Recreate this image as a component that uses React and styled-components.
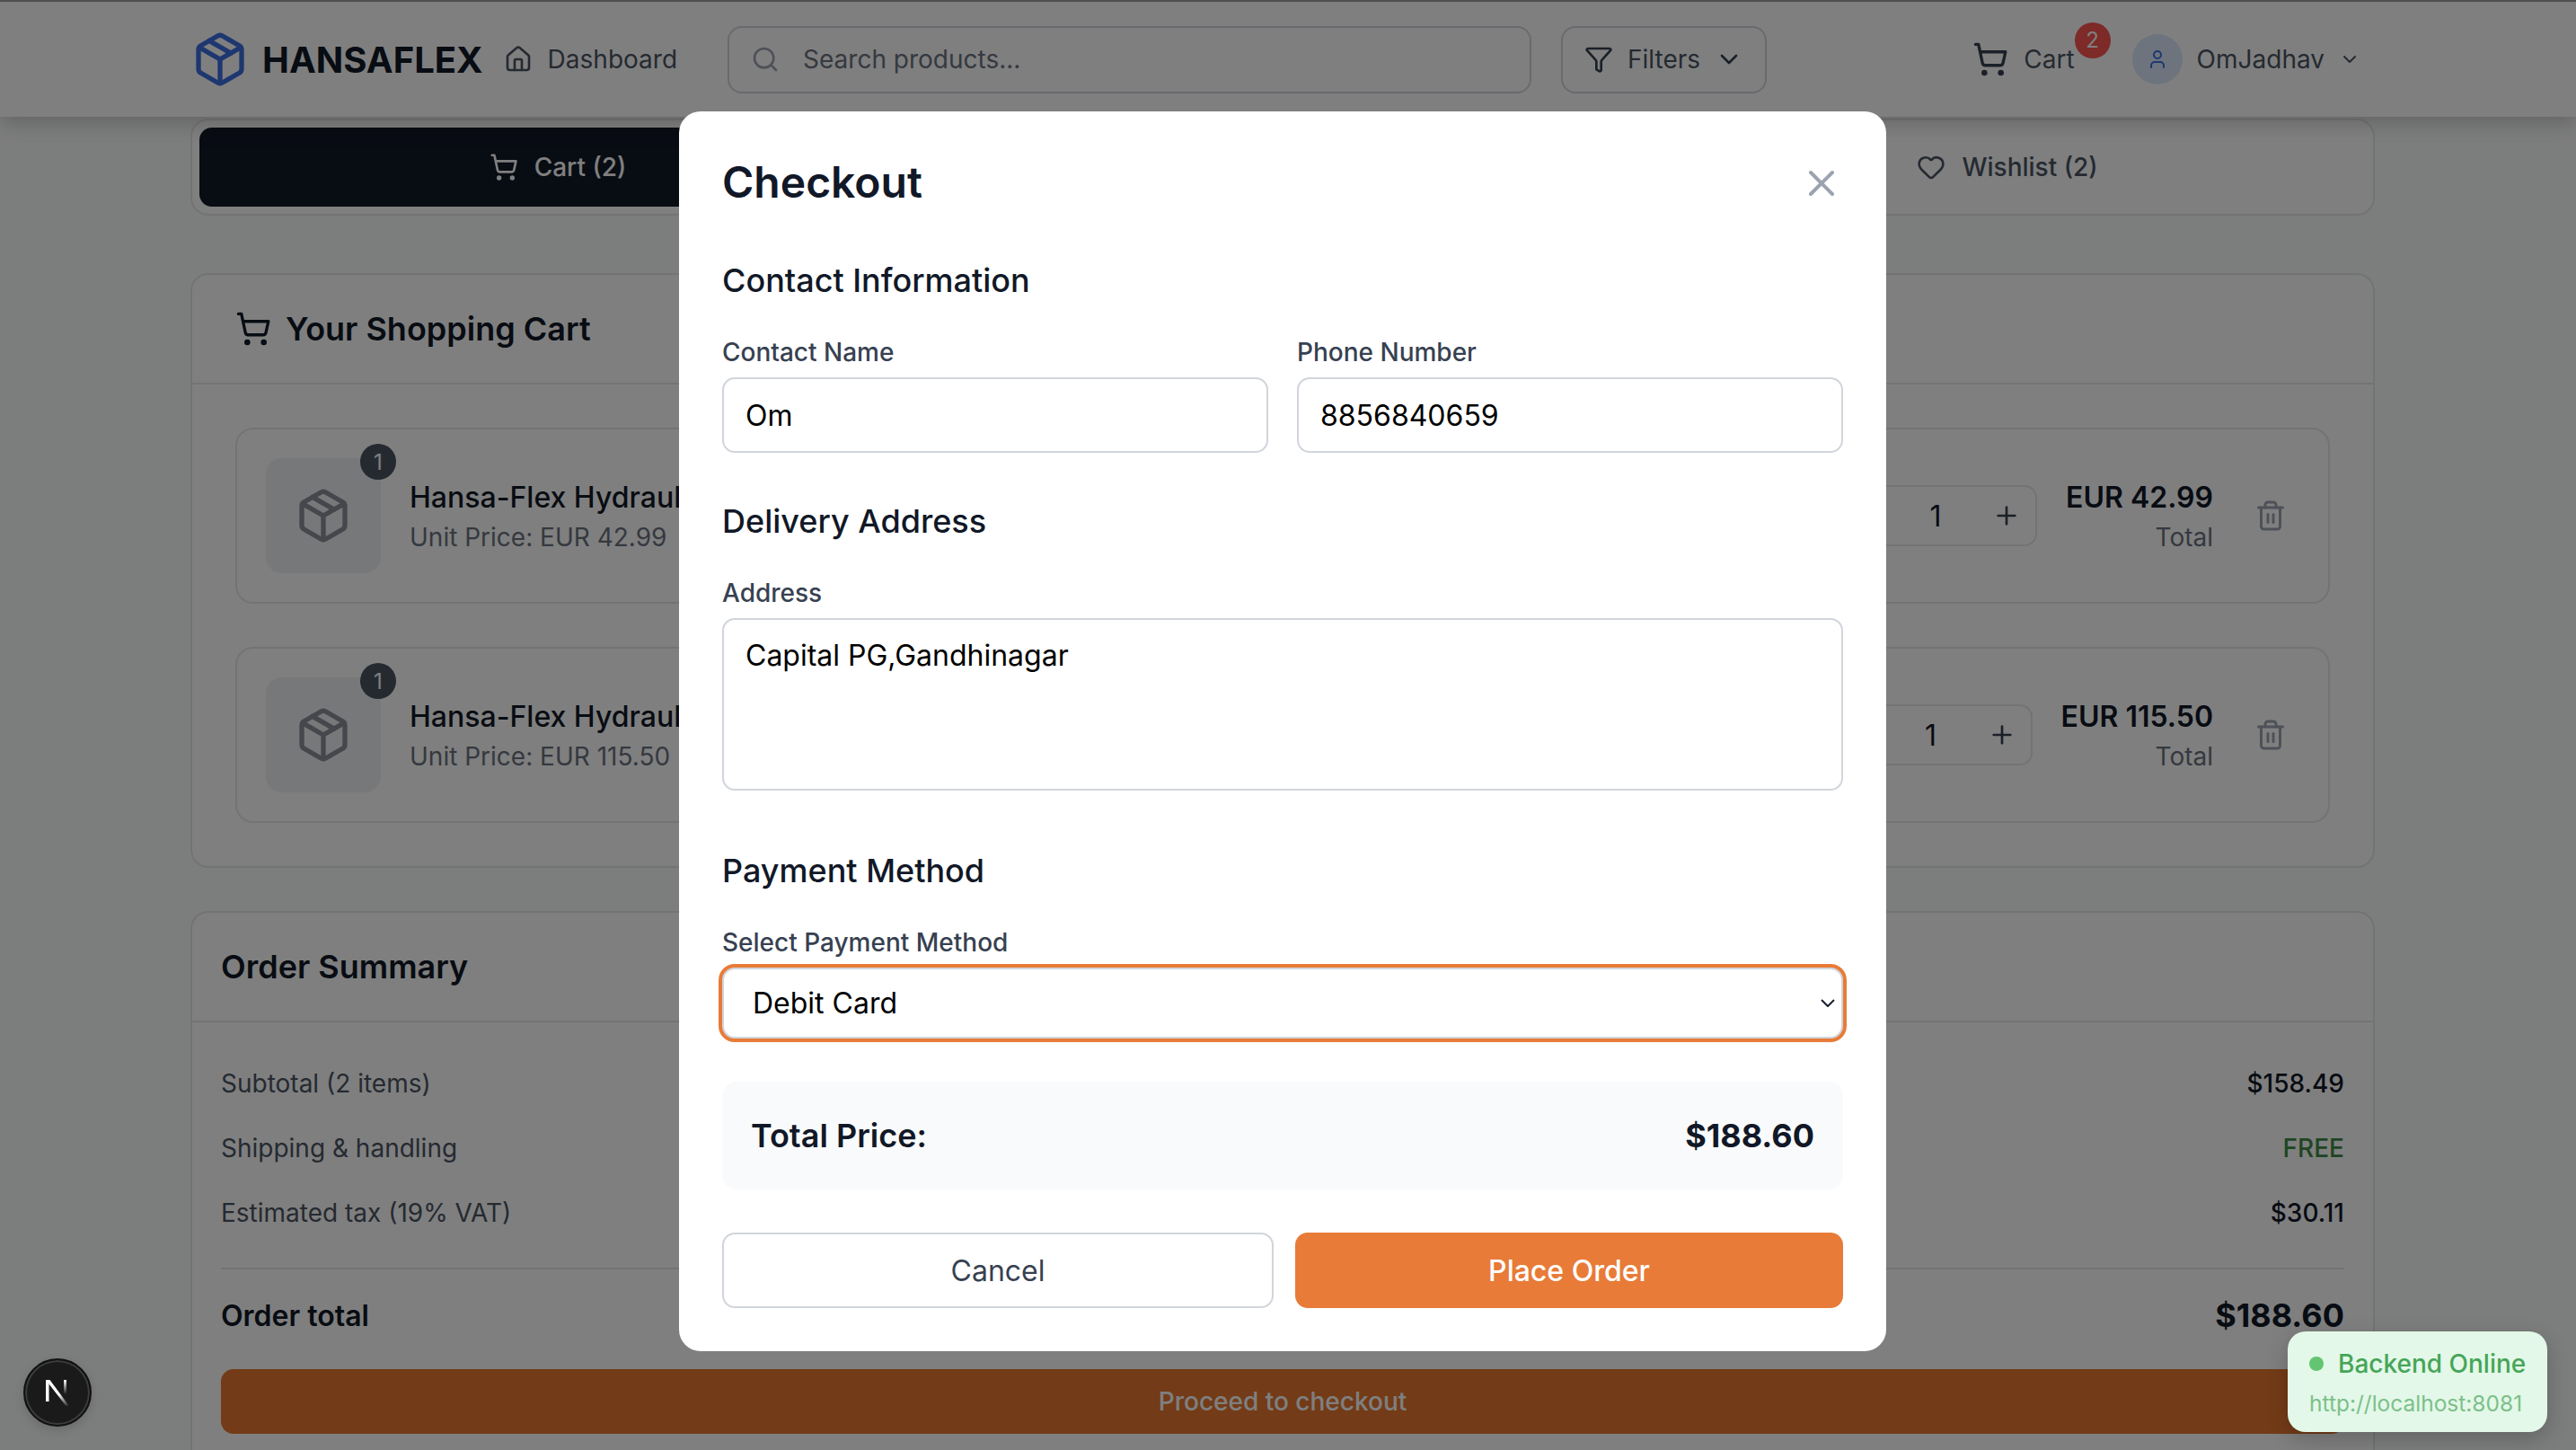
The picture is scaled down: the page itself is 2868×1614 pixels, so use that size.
import React from "react";
import styled, { createGlobalStyle } from "styled-components";
import {
  ChevronDown,
  Funnel,
  Heart,
  House,
  Minus,
  Package,
  Plus,
  Search,
  ShoppingCart,
  Trash2,
  User,
  X,
} from "lucide-react";

const GlobalStyle = createGlobalStyle`
  * { box-sizing: border-box; }
  html, body { margin: 0; padding: 0; }
  body {
    background: #f9fbfa;
    font-family: Inter, "Noto Sans", sans-serif;
    color: #111827;
  }
`;

const Page = styled.div`
  position: relative;
  width: 2868px;
  height: 1614px;
  overflow: hidden;
`;

const Header = styled.header`
  position: relative;
  z-index: 2;
  height: 130px;
  display: flex;
  align-items: center;
  padding: 0 240px 0 213px;
  background: #fff;
  border-top: 2px solid #9e9e9e;
  box-shadow: 0 6px 24px rgba(0, 0, 0, 0.22);
`;

const Brand = styled.div`
  display: flex;
  align-items: center;
  gap: 15px;
  margin-right: 23px;
  color: #3d6fe0;
`;

const BrandName = styled.span`
  font-size: 40px;
  font-weight: 700;
  color: #111827;
`;

const NavLink = styled.a`
  display: flex;
  align-items: center;
  gap: 17px;
  font-size: 28px;
  line-height: 40px;
  color: #4b5563;
`;

const SearchBox = styled.div`
  width: 895px;
  height: 75px;
  margin-left: 56px;
  display: flex;
  align-items: center;
  gap: 26px;
  padding-left: 24px;
  border: 2px solid #d1d5db;
  border-radius: 16px;
  font-size: 28px;
  color: #6b7280;
  svg { color: #9ca3af; }
`;

const FilterButton = styled.button`
  width: 229px;
  height: 75px;
  margin-left: 33px;
  display: flex;
  align-items: center;
  padding: 0 0 0 24px;
  gap: 16px;
  background: none;
  border: 2px solid #d1d5db;
  border-radius: 16px;
  font: inherit;
  font-size: 28px;
  color: #4b5563;
  svg { color: #374151; }
`;

const HeaderRight = styled.div`
  margin-left: auto;
  display: flex;
  align-items: center;
  gap: 64px;
`;

const CartLink = styled(NavLink)`
  position: relative;
  gap: 17px;
  svg { color: #374151; }
`;

const CartBadge = styled.span`
  position: absolute;
  top: -21px;
  right: -40px;
  width: 40px;
  height: 40px;
  border-radius: 50%;
  background: #fb5450;
  color: #fff;
  font-size: 24px;
  display: flex;
  align-items: center;
  justify-content: center;
`;

const UserMenu = styled.div`
  display: flex;
  align-items: center;
  gap: 16px;
  font-size: 28px;
  color: #4b5563;
`;

const Avatar = styled.div`
  width: 56px;
  height: 56px;
  border-radius: 50%;
  background: #dde8fa;
  color: #3d6fe0;
  display: flex;
  align-items: center;
  justify-content: center;
`;

const Main = styled.main`
  margin: 2px 224px 0 212px;
`;

const Tabs = styled.div`
  display: grid;
  grid-template-columns: 798px 1fr 798px;
  padding: 8px;
  border: 2px solid #e5e7eb;
  border-radius: 20px;
  background: #fff;
`;

const Tab = styled.div`
  height: 88px;
  display: flex;
  align-items: center;
  justify-content: center;
  gap: 18px;
  border-radius: 14px;
  font-size: 28px;
  font-weight: 500;
  background: ${(props) => (props.$active ? "#111827" : "transparent")};
  color: ${(props) => (props.$active ? "#fff" : "#4b5563")};
`;

const Card = styled.section`
  margin-top: ${(props) => props.$top};
  border: 2px solid #e5e7eb;
  border-radius: 20px;
  background: #fff;
`;

const CardHeader = styled.div`
  display: flex;
  align-items: center;
  gap: 16px;
  padding: 0 ${(props) => props.$pad};
  border-bottom: 2px solid #e5e7eb;
  box-sizing: content-box;
  height: 120px;
`;

const CardTitle = styled.h2`
  margin: 0;
  font-size: 36px;
  font-weight: 600;
  color: #111827;
`;

const ItemList = styled.div`
  display: flex;
  flex-direction: column;
  gap: 48px;
  padding: 48px;
`;

const Item = styled.div`
  display: flex;
  align-items: center;
  gap: 32px;
  height: 196px;
  padding: 0 32px;
  border: 2px solid #e5e7eb;
  border-radius: 20px;
`;

const Thumb = styled.div`
  position: relative;
  flex: none;
  width: 128px;
  height: 128px;
  display: flex;
  align-items: center;
  justify-content: center;
  border-radius: 18px;
  background: #eef0f2;
  color: #8a8f99;
`;

const ThumbBadge = styled.span`
  position: absolute;
  top: -16px;
  right: -17px;
  width: 40px;
  height: 40px;
  border-radius: 50%;
  background: #4b5563;
  color: #fff;
  font-size: 24px;
  display: flex;
  align-items: center;
  justify-content: center;
`;

const ItemInfo = styled.div`
  flex: 1;
  min-width: 0;
  white-space: nowrap;
  overflow: hidden;
`;

const ItemName = styled.div`
  font-size: 32px;
  line-height: 48px;
  font-weight: 500;
  color: #111827;
`;

const Muted = styled.div`
  font-size: 28px;
  line-height: 40px;
  color: #6b7280;
`;

const Quantity = styled.div`
  display: flex;
  align-items: center;
  border: 2px solid #e5e7eb;
  border-radius: 14px;
  height: 68px;
  color: #111827;
`;

const QuantityButton = styled.span`
  width: 64px;
  display: flex;
  justify-content: center;
  color: #374151;
`;

const QuantityValue = styled.span`
  width: 94px;
  text-align: center;
  font-size: 32px;
`;

const ItemPrice = styled.div`
  text-align: right;
`;

const PriceValue = styled.div`
  font-size: 32px;
  line-height: 48px;
  font-weight: 600;
  color: #111827;
`;

const TrashButton = styled.span`
  padding: 14px;
  display: flex;
  color: #9ca3af;
`;

const SummaryBody = styled.div`
  padding: 48px 32px;
`;

const SummaryRows = styled.div`
  display: flex;
  flex-direction: column;
  gap: 32px;
  padding-bottom: 41px;
  border-bottom: 2px solid #e5e7eb;
`;

const SummaryRow = styled.div`
  display: flex;
  justify-content: space-between;
  font-size: 28px;
  line-height: 40px;
  color: #4b5563;
`;

const SummaryValue = styled.span`
  color: ${(props) => props.$color || "#111827"};
  font-weight: 500;
`;

const TotalRow = styled.div`
  display: flex;
  justify-content: space-between;
  align-items: center;
  height: 56px;
  margin: 23px 0 32px;
  font-size: 32px;
  font-weight: 600;
`;

const TotalValue = styled.span`
  font-size: 36px;
  font-weight: 700;
`;

const CheckoutButton = styled.div`
  height: 72px;
  display: flex;
  align-items: center;
  justify-content: center;
  border-radius: 14px;
  background: #e6772f;
  color: #fff;
  font-size: 28px;
  font-weight: 500;
`;

const Overlay = styled.div`
  position: absolute;
  inset: 0;
  z-index: 5;
  display: flex;
  justify-content: center;
  padding: 124px 12px 0 0;
  background: rgba(0, 0, 0, 0.5);
`;

const Modal = styled.div`
  width: 1344px;
  height: 1380px;
  padding: 48px;
  border-radius: 24px;
  background: #fff;
`;

const ModalHead = styled.div`
  display: flex;
  align-items: center;
  justify-content: space-between;
  height: 64px;
  color: #9ca3af;
`;

const ModalTitle = styled.h1`
  margin: 0 0 4px;
  font-size: 48px;
  font-weight: 600;
  color: #111827;
`;

const SectionTitle = styled.h3`
  margin: ${(props) => props.$top || "48px"} 0 32px;
  font-size: 36px;
  line-height: 56px;
  font-weight: 500;
  color: #111827;
`;

const FieldGrid = styled.div`
  display: grid;
  grid-template-columns: 1fr 1fr;
  gap: 32px;
`;

const Label = styled.label`
  display: block;
  margin-bottom: 8px;
  font-size: 28px;
  line-height: 40px;
  font-weight: 500;
  color: #374151;
`;

const Input = styled.input`
  display: block;
  width: 100%;
  height: 84px;
  padding: 0 24px;
  border: 2px solid #d1d5db;
  border-radius: 14px;
  outline: none;
  font: inherit;
  font-size: 32px;
  color: #000;
`;

const TextArea = styled.textarea`
  display: block;
  width: 100%;
  height: 192px;
  padding: 18px 24px;
  border: 2px solid #d1d5db;
  border-radius: 14px;
  outline: none;
  resize: none;
  font: inherit;
  font-size: 32px;
  line-height: 44px;
  color: #000;
`;

const SelectWrap = styled.div`
  position: relative;
`;

const Select = styled.select`
  display: block;
  width: 100%;
  height: 79px;
  padding: 0 32px;
  appearance: none;
  background: #fff;
  border: 2px solid #d1d5db;
  border-radius: 14px;
  outline: none;
  box-shadow: 0 0 0 4px #e87b38;
  font: inherit;
  font-size: 32px;
  color: #000;
`;

const SelectArrow = styled.svg`
  position: absolute;
  top: 35px;
  right: 9px;
  width: 16px;
  height: 9px;
`;

const PriceBox = styled.div`
  display: flex;
  align-items: center;
  justify-content: space-between;
  height: 120px;
  margin-top: 48px;
  padding: 0 32px;
  border-radius: 16px;
  background: #f9fafb;
  font-size: 36px;
  font-weight: 600;
  color: #111827;
`;

const PriceBoxValue = styled.span`
  font-weight: 700;
`;

const Actions = styled.div`
  display: grid;
  grid-template-columns: 614px 1fr;
  gap: 24px;
  margin-top: 48px;
`;

const ActionButton = styled.button`
  height: 84px;
  border-radius: 14px;
  font: inherit;
  font-size: 32px;
  font-weight: ${(props) => (props.$primary ? 500 : 400)};
  background: ${(props) => (props.$primary ? "#e87b38" : "#fff")};
  color: ${(props) => (props.$primary ? "#fff" : "#374151")};
  border: ${(props) => (props.$primary ? "none" : "2px solid #d1d5db")};
`;

const StatusToast = styled.div`
  position: absolute;
  z-index: 6;
  right: 32px;
  bottom: 20px;
  width: 289px;
  height: 112px;
  padding: 16px 24px;
  border-radius: 20px;
  background: #e3f8e8;
  box-shadow: 0 8px 24px rgba(0, 0, 0, 0.2);
  white-space: nowrap;
`;

const StatusRow = styled.div`
  display: flex;
  align-items: center;
  gap: 16px;
  font-size: 28px;
  line-height: 40px;
  font-weight: 500;
  color: #46a558;
`;

const StatusDot = styled.span`
  flex: none;
  width: 16px;
  height: 16px;
  border-radius: 50%;
  background: #63c571;
`;

const StatusUrl = styled.div`
  margin-top: 8px;
  font-size: 24.5px;
  line-height: 32px;
  color: #7cc08b;
`;

const DevBadge = styled.div`
  position: absolute;
  z-index: 6;
  left: 26px;
  bottom: 26px;
  width: 76px;
  height: 76px;
  border-radius: 50%;
  display: flex;
  align-items: center;
  justify-content: center;
  background: #1a1a1a;
  border: 2px solid #111;
  box-shadow: inset 0 0 0 2px #3c3c3c, 0 4px 12px rgba(0, 0, 0, 0.15);
`;

const items = [
  { id: 1, unit: "EUR 42.99" },
  { id: 2, unit: "EUR 115.50" },
];

const summary = [
  { label: "Subtotal (2 items)", value: "$158.49" },
  { label: "Shipping & handling", value: "FREE", color: "#3f8a45" },
  { label: "Estimated tax (19% VAT)", value: "$30.11" },
];

function NextLogo() {
  return (
    <svg width="28" height="30" viewBox="0 0 28 30">
      <defs>
        <linearGradient id="nextDiagonal" x1="0" y1="0" x2="1" y2="1">
          <stop offset="0.55" stopColor="#fff" />
          <stop offset="1" stopColor="#fff" stopOpacity="0" />
        </linearGradient>
        <linearGradient id="nextBar" x1="0" y1="0" x2="0" y2="1">
          <stop offset="0" stopColor="#fff" />
          <stop offset="1" stopColor="#fff" stopOpacity="0" />
        </linearGradient>
      </defs>
      <rect x="1" y="1" width="3.5" height="24" fill="#fff" />
      <polygon points="1,1 5.5,1 27,30 23.5,30" fill="url(#nextDiagonal)" />
      <rect x="21" y="1" width="3" height="16" fill="url(#nextBar)" />
    </svg>
  );
}

function App() {
  return (
    <Page>
      <GlobalStyle />
      <Header>
        <Brand>
          <Package size={64} />
          <BrandName>HANSAFLEX</BrandName>
        </Brand>
        <NavLink>
          <House size={32} />
          Dashboard
        </NavLink>
        <SearchBox>
          <Search size={32} />
          Search products...
        </SearchBox>
        <FilterButton>
          <Funnel size={32} />
          Filters
          <ChevronDown size={32} />
        </FilterButton>
        <HeaderRight>
          <CartLink>
            <ShoppingCart size={40} />
            Cart
            <CartBadge>2</CartBadge>
          </CartLink>
          <UserMenu>
            <Avatar>
              <User size={24} />
            </Avatar>
            OmJadhav
            <ChevronDown size={24} />
          </UserMenu>
        </HeaderRight>
      </Header>

      <Main>
        <Tabs>
          <Tab $active>
            <ShoppingCart size={32} />
            Cart (2)
          </Tab>
          <Tab>Orders</Tab>
          <Tab>
            <Heart size={32} />
            Wishlist (2)
          </Tab>
        </Tabs>

        <Card $top="64px">
          <CardHeader $pad="48px">
            <ShoppingCart size={40} />
            <CardTitle>Your Shopping Cart</CardTitle>
          </CardHeader>
          <ItemList>
            {items.map((item) => (
              <Item key={item.id}>
                <Thumb>
                  <Package size={64} />
                  <ThumbBadge>1</ThumbBadge>
                </Thumb>
                <ItemInfo>
                  <ItemName>Hansa-Flex Hydraulic Hose</ItemName>
                  <Muted>Unit Price: {item.unit}</Muted>
                </ItemInfo>
                <Quantity>
                  <QuantityButton>
                    <Minus size={32} />
                  </QuantityButton>
                  <QuantityValue>1</QuantityValue>
                  <QuantityButton>
                    <Plus size={32} />
                  </QuantityButton>
                </Quantity>
                <ItemPrice>
                  <PriceValue>{item.unit}</PriceValue>
                  <Muted>Total</Muted>
                </ItemPrice>
                <TrashButton>
                  <Trash2 size={36} />
                </TrashButton>
              </Item>
            ))}
          </ItemList>
        </Card>

        <Card $top="48px">
          <CardHeader $pad="32px">
            <CardTitle>Order Summary</CardTitle>
          </CardHeader>
          <SummaryBody>
            <SummaryRows>
              {summary.map((row) => (
                <SummaryRow key={row.label}>
                  <span>{row.label}</span>
                  <SummaryValue $color={row.color}>{row.value}</SummaryValue>
                </SummaryRow>
              ))}
            </SummaryRows>
            <TotalRow>
              <span>Order total</span>
              <TotalValue>$188.60</TotalValue>
            </TotalRow>
            <CheckoutButton>Proceed to checkout</CheckoutButton>
          </SummaryBody>
        </Card>
      </Main>

      <Overlay>
        <Modal>
          <ModalHead>
            <ModalTitle>Checkout</ModalTitle>
            <X size={48} />
          </ModalHead>

          <SectionTitle>Contact Information</SectionTitle>
          <FieldGrid>
            <div>
              <Label>Contact Name</Label>
              <Input readOnly value="Om" />
            </div>
            <div>
              <Label>Phone Number</Label>
              <Input readOnly value="8856840659" />
            </div>
          </FieldGrid>

          <SectionTitle>Delivery Address</SectionTitle>
          <Label>Address</Label>
          <TextArea readOnly value="Capital PG,Gandhinagar" />

          <SectionTitle $top="61px">Payment Method</SectionTitle>
          <Label>Select Payment Method</Label>
          <SelectWrap>
            <Select defaultValue="debit">
              <option value="debit">Debit Card</option>
            </Select>
            <SelectArrow viewBox="0 0 16 9" fill="none">
              <path d="M1 1l7 7 7-7" stroke="#1a1f2e" strokeWidth="2" />
            </SelectArrow>
          </SelectWrap>

          <PriceBox>
            <span>Total Price:</span>
            <PriceBoxValue>$188.60</PriceBoxValue>
          </PriceBox>

          <Actions>
            <ActionButton>Cancel</ActionButton>
            <ActionButton $primary>Place Order</ActionButton>
          </Actions>
        </Modal>
      </Overlay>

      <StatusToast>
        <StatusRow>
          <StatusDot />
          Backend Online
        </StatusRow>
        <StatusUrl>http://localhost:8081</StatusUrl>
      </StatusToast>
      <DevBadge>
        <NextLogo />
      </DevBadge>
    </Page>
  );
}

export default App;
